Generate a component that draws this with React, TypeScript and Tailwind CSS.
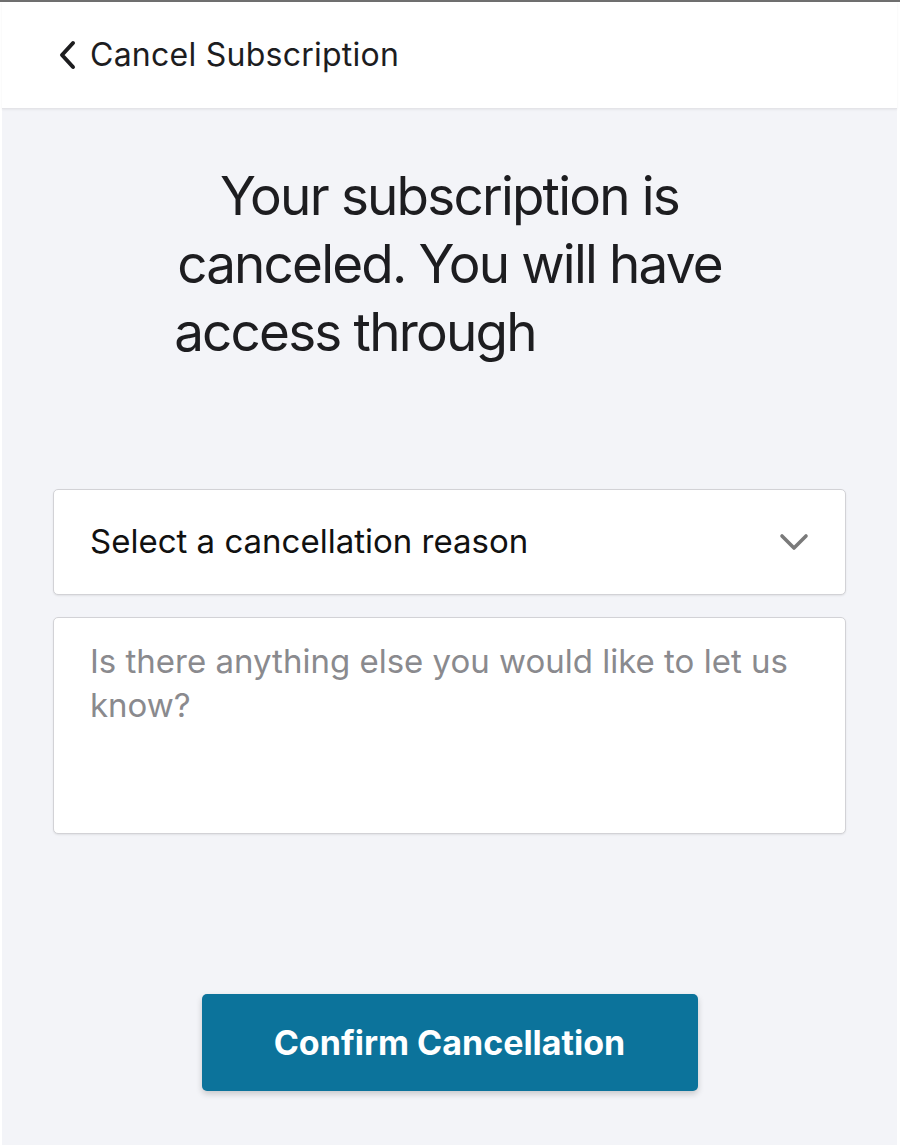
export default function App() {
    return (
        <div className="w-[900px] h-[1147px] bg-white border-t-2 border-[#6f6f6f] pl-[2px] pr-[3px] pb-[2px] font-['Inter','Liberation_Sans',sans-serif]">
            <div className="flex flex-col h-full bg-[#f3f4f8]">
                <header className="h-[107px] shrink-0 bg-white flex items-center pl-[55px] border-b border-[#e4e4e8] shadow-[0_1px_2px_rgba(0,0,0,0.06)]">
                    <svg width="22" height="30" viewBox="0 0 22 30" className="text-[#1d1d1f]">
                        <polyline points="16,3 5,15 16,27" fill="none" stroke="currentColor" strokeWidth="4" strokeLinecap="round" strokeLinejoin="round" />
                    </svg>
                    <span className="ml-[11px] text-[32px] text-[#1d1d1f] tracking-[0.25px]">Cancel Subscription</span>
                </header>

                <main className="flex flex-col items-center px-[51px]">
                    <h1 className="mt-[53px] text-center text-[53px] leading-[68px] tracking-[-1.8px] text-[#1d1d20] w-[600px]">
                        Your subscription is canceled. You will have access through{" "}
                        <span className="inline-block w-[176px]" />
                    </h1>

                    <div className="mt-[123px] w-full h-[106px] bg-white border border-[#d2d2d6] rounded-[5px] shadow-[0_1px_2px_rgba(0,0,0,0.08)] flex items-center justify-between pl-[36px] pr-[36px]">
                        <span className="text-[33px] text-[#111]">Select a cancellation reason</span>
                        <svg width="30" height="20" viewBox="0 0 30 20" className="text-[#7a7a7a]">
                            <polyline points="3,4 15,16 27,4" fill="none" stroke="currentColor" strokeWidth="3.6" strokeLinecap="round" strokeLinejoin="round" />
                        </svg>
                    </div>

                    <div className="mt-[22px] w-full h-[217px] bg-white border border-[#d2d2d6] rounded-[5px] shadow-[0_1px_2px_rgba(0,0,0,0.08)] pl-[36px] pr-[40px] pt-[21px]">
                        <p className="text-[33px] leading-[44px] text-[#8a8a8e]">
                            Is there anything else you would like to let us know?
                        </p>
                    </div>

                    <button className="mt-[160px] w-[496px] h-[97px] rounded-[5px] bg-[#0c739b] text-white text-[34px] font-bold shadow-[0_3px_6px_rgba(0,0,0,0.18)]">
                        Confirm Cancellation
                    </button>
                </main>
            </div>
        </div>
    );
}
